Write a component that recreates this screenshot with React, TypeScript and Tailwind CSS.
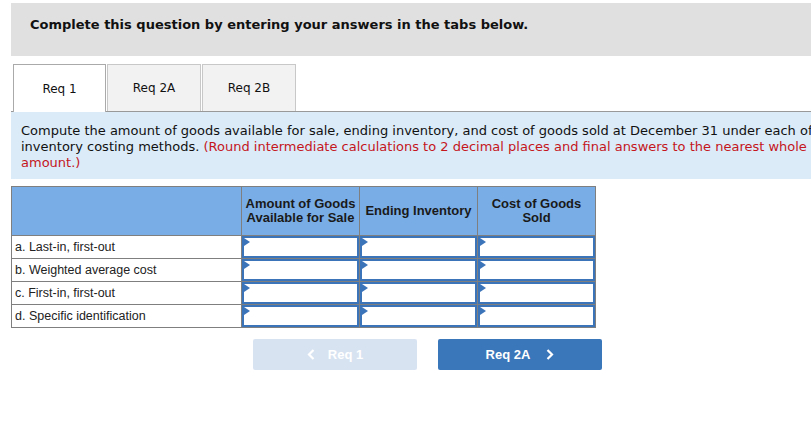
import React from 'react';

const verdana = { fontFamily: '"DejaVu Sans", Verdana, sans-serif' };
const arial = { fontFamily: '"Liberation Sans", Arial, sans-serif' };

const rows = [
  'a. Last-in, first-out',
  'b. Weighted average cost',
  'c. First-in, first-out',
  'd. Specific identification',
];

const InputCell: React.FC = () => (
  <div className="border-t border-l border-[#7f7f7f] h-[23px] bg-white">
    <div className="relative h-full border-2 border-[#3b74b9] bg-white">
      <svg className="absolute left-0 top-0" width="6" height="8" viewBox="0 0 6 8">
        <path d="M0 0 L6 4 L0 8 Z" fill="#3b74b9" />
      </svg>
    </div>
  </div>
);

const App: React.FC = () => {
  return (
    <div className="w-[811px] h-[440px] overflow-hidden bg-white">
      <div className="w-[840px] pl-[11px] pt-[3px]">
        <div className="h-[53px] bg-[#e0e0e0] pl-[19px] pt-[12px]">
          <p className="text-[13px] font-bold text-[#111]" style={verdana}>
            Complete this question by entering your answers in the tabs below.
          </p>
        </div>

        <div className="mt-[8px] flex items-end border-b border-[#999] pl-[2px] h-[48px]">
          <div
            className="w-[93px] h-[48px] -mb-px bg-white border border-b-0 border-[#aaa] flex items-center justify-center text-[12px] text-[#111]"
            style={verdana}
          >
            Req 1
          </div>
          <div
            className="ml-[1px] w-[94px] h-[47px] bg-[#f2f2f2] border border-b-0 border-[#c8c8c8] flex items-center justify-center text-[12px] text-[#111]"
            style={verdana}
          >
            Req 2A
          </div>
          <div
            className="ml-[1px] w-[94px] h-[47px] bg-[#f2f2f2] border border-b-0 border-[#c8c8c8] flex items-center justify-center text-[12px] text-[#111]"
            style={verdana}
          >
            Req 2B
          </div>
        </div>

        <div
          className="h-[67px] bg-[#dbebf8] pl-[10px] pt-[11px] text-[13px] leading-[16px] text-[#111] whitespace-nowrap"
          style={verdana}
        >
          <div>
            Compute the amount of goods available for sale, ending inventory, and cost of goods sold at December 31 under each of
          </div>
          <div>
            inventory costing methods.{' '}
            <span className="text-[#c4161c]">
              (Round intermediate calculations to 2 decimal places and final answers to the nearest whole
            </span>
          </div>
          <div className="text-[#c4161c]">amount.)</div>
        </div>

        <div
          className="mt-[7px] w-[585px] grid grid-cols-[229px_118px_118px_118px] border border-[#7f7f7f] text-[13px] text-[#1a1a1a]"
          style={arial}
        >
          <div className="h-[48px] bg-[#79ade6]" />
          <div className="h-[48px] bg-[#79ade6] border-l border-[#7f7f7f] flex items-center justify-center text-center font-bold leading-[14px]">
            Amount of Goods
            <br />
            Available for Sale
          </div>
          <div className="h-[48px] bg-[#79ade6] border-l border-[#7f7f7f] flex items-center justify-center text-center font-bold">
            Ending Inventory
          </div>
          <div className="h-[48px] bg-[#79ade6] border-l border-[#7f7f7f] flex items-center justify-center text-center font-bold leading-[14px]">
            Cost of Goods
            <br />
            Sold
          </div>
          {rows.map((label) => (
            <React.Fragment key={label}>
              <div className="h-[23px] border-t border-[#7f7f7f] flex items-center pl-[3px] text-[12.5px] text-[#222]">
                {label}
              </div>
              <InputCell />
              <InputCell />
              <InputCell />
            </React.Fragment>
          ))}
        </div>

        <div className="mt-[11px] flex gap-[21px] pl-[242px]" style={arial}>
          <button className="w-[164px] h-[31px] rounded-[2px] bg-[#d8e3f1] text-white font-bold text-[13px] flex items-center justify-center gap-[13px]">
            <svg width="8" height="11" viewBox="0 0 8 11">
              <path d="M6.5 1 L2 5.5 L6.5 10" stroke="white" strokeWidth="2.2" fill="none" />
            </svg>
            <span>Req 1</span>
          </button>
          <button className="w-[164px] h-[31px] rounded-[2px] bg-[#3a76ba] text-white font-bold text-[13px] flex items-center justify-center gap-[16px]">
            <span>Req 2A</span>
            <svg width="8" height="11" viewBox="0 0 8 11">
              <path d="M1.5 1 L6 5.5 L1.5 10" stroke="white" strokeWidth="2.2" fill="none" />
            </svg>
          </button>
        </div>
      </div>
    </div>
  );
};

export default App;
